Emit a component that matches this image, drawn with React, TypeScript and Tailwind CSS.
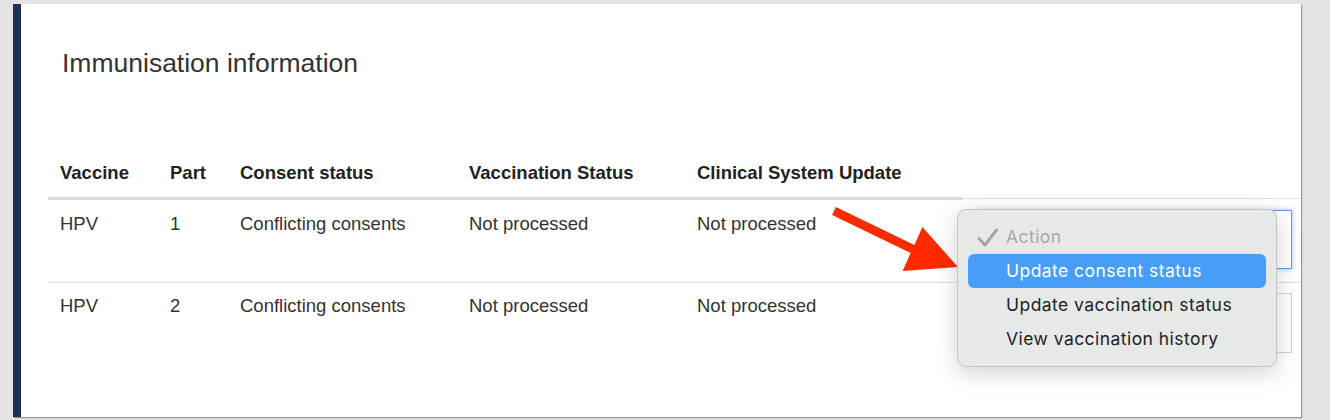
const rows = [
  { vaccine: "HPV", part: "1", consent: "Conflicting consents", vacc: "Not processed", clinical: "Not processed", focused: true },
  { vaccine: "HPV", part: "2", consent: "Conflicting consents", vacc: "Not processed", clinical: "Not processed", focused: false },
];

const headers = ["Vaccine", "Part", "Consent status", "Vaccination Status", "Clinical System Update"];

function ActionMenu() {
  const items = ["Update consent status", "Update vaccination status", "View vaccination history"];
  return (
    <div className="absolute left-[957px] top-[209px] w-[320px] h-[158px] rounded-[9px] bg-[#e7e9e9] border border-[#c3c5c5] shadow-[0_6px_22px_rgba(0,0,0,0.18)] px-[10px] pt-[10px] font-['Inter',sans-serif] text-[17.5px] tracking-[0.45px]">
      <div className="relative h-[34px] flex items-center pl-[38px] text-[#a7a9a9]">
        <svg className="absolute left-[9px] top-[8px]" width="21" height="19" viewBox="0 0 21 19">
          <path d="M2 10.5 L8 17 L19.5 2" fill="none" stroke="#a3a5a5" strokeWidth="3" strokeLinecap="round" strokeLinejoin="round" />
        </svg>
        Action
      </div>
      {items.map((item, i) => (
        <div
          key={item}
          className={
            i === 0
              ? "h-[34px] flex items-center pl-[38px] rounded-[6px] bg-[#469ef8] text-white"
              : "h-[34px] flex items-center pl-[38px] text-[#222]"
          }
        >
          {item}
        </div>
      ))}
    </div>
  );
}

function Arrow() {
  return (
    <svg className="absolute left-0 top-0 pointer-events-none" width="1330" height="420">
      <polygon
        points="835.9,206.9 914.4,244.9 922.4,227.1 958,267 902.6,270.9 910.6,253.1 832.1,215.1"
        fill="#ff2a00"
      />
    </svg>
  );
}

export default function App() {
  return (
    <div className="relative h-[420px] bg-[#e4e4e4] pt-[4px] pl-[13px] pr-[29px] font-['Liberation_Sans',Arial,sans-serif]">
      <div className="h-[413px] bg-white border-l-[8px] border-[#1d3158] shadow-[1px_1px_1px_rgba(0,0,0,0.35)]">
        <h1 className="pt-[43px] pl-[41px] text-[26.5px] leading-[32px] text-[#333]">Immunisation information</h1>

        <div className="ml-[27px] mt-[69px] grid grid-cols-[110px_70px_229px_228px_278px_1fr] text-[18.5px] leading-[26px]">
          {headers.map((h) => (
            <div key={h} className="pl-[12px] pt-[12px] pb-[11px] font-bold text-[#222] border-b-[3px] border-[#dcdcdc] whitespace-nowrap">
              {h}
            </div>
          ))}
          <div className="border-b border-[#dedede] mb-[1px]" />

          {rows.map((r, idx) => (
            <div key={idx} className="contents">
              {[r.vaccine, r.part, r.consent, r.vacc, r.clinical].map((v, j) => (
                <div
                  key={j}
                  className={
                    idx === 0
                      ? "pl-[12px] pt-[11px] text-[#333] border-b border-[#dedede]"
                      : "pl-[12px] pt-[10px] text-[#333]"
                  }
                >
                  {v}
                </div>
              ))}
              <div className={idx === 0 ? "pl-[12px] pr-[9px] pt-[10px] pb-[13px] border-b border-[#dedede]" : "pl-[12px] pr-[9px] pt-[10px]"}>
                <div
                  className={
                    r.focused
                      ? "h-[59px] bg-white border border-[#5e9de2] shadow-[0_0_5px_rgba(80,150,230,0.55)]"
                      : "h-[60px] bg-white border border-[#d0d0d0]"
                  }
                />
              </div>
            </div>
          ))}
        </div>
      </div>
      <Arrow />
      <ActionMenu />
    </div>
  );
}
